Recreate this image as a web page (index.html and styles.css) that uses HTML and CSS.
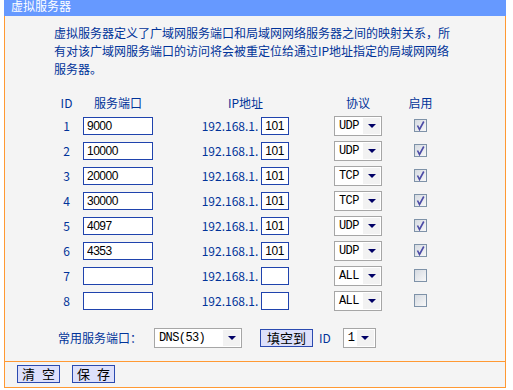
FILE: index.html
```html
<!DOCTYPE html>
<html>
<head>
  <meta charset="utf-8">
  <title>虚拟服务器</title>
  <link rel="stylesheet" href="styles.css">
</head>
<body>
	<div class="panel">
		<div class="title">虚拟服务器</div>

		<div class="content">
			<p class="intro">虚拟服务器定义了广域网服务端口和局域网网络服务器之间的映射关系，所有对该广域网服务端口的访问将会被重定位给通过IP地址指定的局域网网络服务器。</p>

			<div class="grid">
				<div class="c-id">ID</div>
				<div class="c-port head">服务端口</div>
				<div class="c-ip">IP地址</div>
				<div class="c-proto">协议</div>
				<div class="c-en">启用</div>

				<!-- 1 -->
				<div class="c-id">1</div>
				<input class="c-port port" type="text" value="9000">
				<div class="c-ip ip"><span>192.168.1.</span><input class="host" type="text" value="101"></div>
				<div class="c-proto select proto"><span class="val">UDP</span><span class="arrow"></span></div>
				<span class="c-en check on"><svg width="11" height="11" viewBox="0 0 11 11"><path d="M2.5 5.5 L4.5 9.5 L8.8 1.5"/></svg></span>

				<!-- 2 -->
				<div class="c-id">2</div>
				<input class="c-port port" type="text" value="10000">
				<div class="c-ip ip"><span>192.168.1.</span><input class="host" type="text" value="101"></div>
				<div class="c-proto select proto"><span class="val">UDP</span><span class="arrow"></span></div>
				<span class="c-en check on"><svg width="11" height="11" viewBox="0 0 11 11"><path d="M2.5 5.5 L4.5 9.5 L8.8 1.5"/></svg></span>

				<!-- 3 -->
				<div class="c-id">3</div>
				<input class="c-port port" type="text" value="20000">
				<div class="c-ip ip"><span>192.168.1.</span><input class="host" type="text" value="101"></div>
				<div class="c-proto select proto"><span class="val">TCP</span><span class="arrow"></span></div>
				<span class="c-en check on"><svg width="11" height="11" viewBox="0 0 11 11"><path d="M2.5 5.5 L4.5 9.5 L8.8 1.5"/></svg></span>

				<!-- 4 -->
				<div class="c-id">4</div>
				<input class="c-port port" type="text" value="30000">
				<div class="c-ip ip"><span>192.168.1.</span><input class="host" type="text" value="101"></div>
				<div class="c-proto select proto"><span class="val">TCP</span><span class="arrow"></span></div>
				<span class="c-en check on"><svg width="11" height="11" viewBox="0 0 11 11"><path d="M2.5 5.5 L4.5 9.5 L8.8 1.5"/></svg></span>

				<!-- 5 -->
				<div class="c-id">5</div>
				<input class="c-port port" type="text" value="4097">
				<div class="c-ip ip"><span>192.168.1.</span><input class="host" type="text" value="101"></div>
				<div class="c-proto select proto"><span class="val">UDP</span><span class="arrow"></span></div>
				<span class="c-en check on"><svg width="11" height="11" viewBox="0 0 11 11"><path d="M2.5 5.5 L4.5 9.5 L8.8 1.5"/></svg></span>

				<!-- 6 -->
				<div class="c-id">6</div>
				<input class="c-port port" type="text" value="4353">
				<div class="c-ip ip"><span>192.168.1.</span><input class="host" type="text" value="101"></div>
				<div class="c-proto select proto"><span class="val">UDP</span><span class="arrow"></span></div>
				<span class="c-en check on"><svg width="11" height="11" viewBox="0 0 11 11"><path d="M2.5 5.5 L4.5 9.5 L8.8 1.5"/></svg></span>

				<!-- 7 -->
				<div class="c-id">7</div>
				<input class="c-port port" type="text" value="">
				<div class="c-ip ip"><span>192.168.1.</span><input class="host" type="text" value=""></div>
				<div class="c-proto select proto"><span class="val">ALL</span><span class="arrow"></span></div>
				<span class="c-en check"></span>

				<!-- 8 -->
				<div class="c-id">8</div>
				<input class="c-port port" type="text" value="">
				<div class="c-ip ip"><span>192.168.1.</span><input class="host" type="text" value=""></div>
				<div class="c-proto select proto"><span class="val">ALL</span><span class="arrow"></span></div>
				<span class="c-en check"></span>
			</div>

			<div class="common">
				<span class="label">常用服务端口：</span>
				<div class="select dns"><span class="val">DNS(53)</span><span class="arrow"></span></div>
				<button class="btn fill">填空到</button>
				<span class="id-label">ID</span>
				<div class="select idsel"><span class="val">1</span><span class="arrow"></span></div>
			</div>
		</div>

		<div class="actions">
			<button class="btn">清 空</button>
			<button class="btn">保 存</button>
		</div>
	</div>
</body>
</html>
```

FILE: styles.css
```css
body {
	background: #fff;
	margin: 0;
	padding: 0;
	font-family: "Noto Sans CJK SC", sans-serif;
	font-size: 12px;
	color: #003399;
}

.panel {
	width: 502px;
	margin-left: 4px;
}

.title {
	height: 16px;
	background: #6699ff;
	color: #fff;
	line-height: 11px;
	padding-left: 7px;
}

.content {
	background: #f4f4f4;
	border-left: 1px solid #ff9933;
	border-right: 1px solid #ff9933;
	padding: 8px 0 11px 0;
}

.intro {
	margin: 0 0 13px 49px;
	width: 402px;
	line-height: 18px;
}

/* the port table */
.grid {
	display: grid;
	grid-template-columns: 33px 97px 131px 94px 31px;
	grid-template-rows: 22px;
	grid-auto-rows: 25px;
	align-items: center;
	justify-items: center;
	margin-left: 45px;
}

.c-port { justify-self: start; }
.head { width: 70px; text-align: center; }

input {
	box-sizing: border-box;
	height: 18px;
	margin: 0;
	border: 1px solid #1f43ad;
	background: #fff;
	padding: 0 0 0 3px;
	font-family: "Liberation Sans", Arial, sans-serif;
	font-size: 12px;
	letter-spacing: -0.5px;
	color: #000;
	outline: none;
}

.port { width: 70px; }
.host { width: 28px; }

.ip {
	display: flex;
	align-items: center;
	gap: 3px;
}

/* fake drop-down */
.select {
	display: flex;
	box-sizing: border-box;
	height: 20px;
	border: 1px solid #a6a6a6;
	background: #fff;
	color: #000;
	font-family: "Liberation Mono", monospace;
	font-size: 12px;
	letter-spacing: -0.6px;
}
.select .val {
	flex: 1;
	padding-left: 4px;
	line-height: 18px;
}
.select .arrow {
	width: 17px;
	margin: 1px;
	background: #f2f2f2;
	display: flex;
	align-items: center;
	justify-content: center;
}
.select .arrow::after {
	content: "";
	border-top: 4px solid #000066;
	border-left: 4px solid transparent;
	border-right: 4px solid transparent;
}

.proto { width: 48px; }
.dns { width: 88px; }
.idsel { width: 33px; }

.check {
	box-sizing: border-box;
	width: 13px;
	height: 13px;
	border: 1px solid #7e92a8;
	background: linear-gradient(135deg, #d5dae1, #f8f8f8);
	display: flex;
	align-items: center;
	justify-content: center;
}
.check path {
	fill: none;
	stroke: #4b4ba6;
	stroke-width: 1.6;
}

.common {
	display: flex;
	align-items: center;
	height: 25px;
	margin: 12px 0 0 53px;
}
.common .label { width: 96px; }
.common .fill { margin-left: 18px; width: 53px; }
.id-label { margin: 0 12px 0 6px; }

.btn {
	box-sizing: border-box;
	height: 18px;
	width: 43px;
	padding: 0;
	margin: 0;
	border: 1px solid #2b4ab0;
	background: #dde0fb;
	color: #000;
	font-family: "Noto Sans CJK SC", sans-serif;
	font-size: 13px;
	line-height: 16px;
	word-spacing: 4px;
}

.actions {
	display: flex;
	gap: 12px;
	background: #f4f4f4;
	border: 1px solid #ff9933;
	padding: 3px 12px 4px;
}
```
